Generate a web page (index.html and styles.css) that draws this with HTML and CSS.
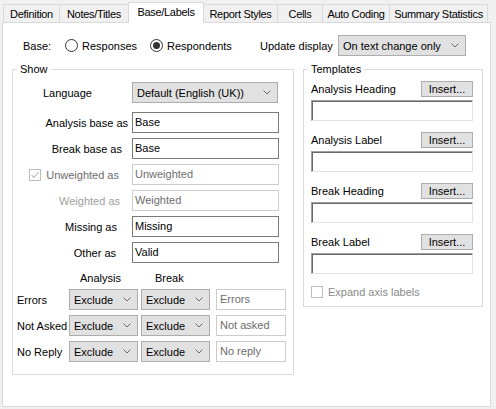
FILE: index.html
```html
<!DOCTYPE html>
<html>
<head>
<meta charset="utf-8">
<link rel="stylesheet" href="styles.css">
</head>
<body>
<div class="tabs">
  <div class="tab t-def">Definition</div>
  <div class="tab t-notes">Notes/Titles</div>
  <div class="tab tab-active t-base">Base/Labels</div>
  <div class="tab t-report">Report Styles</div>
  <div class="tab t-cells">Cells</div>
  <div class="tab t-auto">Auto Coding</div>
  <div class="tab t-sum">Summary Statistics</div>
</div>
<div class="panel">
  <div class="base-row">
    <span class="base-label">Base:</span>
    <span class="radio-opt opt1"><span class="radio"></span>Responses</span>
    <span class="radio-opt opt2"><span class="radio radio-on"></span>Respondents</span>
    <span class="upd-label">Update display</span>
    <div class="select sel-update"><span>On text change only</span><svg class="chev" width="8" height="5" viewBox="0 0 8 5"><polyline points="0.5,0.5 4,4 7.5,0.5" fill="none" stroke="#6a6a6a" stroke-width="1"/></svg></div>
  </div>
  <div class="columns">
    <fieldset class="group show">
      <legend>Show</legend>
      <div class="row lang-row">
        <span class="lang-label">Language</span>
        <div class="select sel-lang"><span>Default (English (UK))</span><svg class="chev" width="8" height="5" viewBox="0 0 8 5"><polyline points="0.5,0.5 4,4 7.5,0.5" fill="none" stroke="#6a6a6a" stroke-width="1"/></svg></div>
      </div>
      <div class="row"><span class="flabel">Analysis base as</span><div class="tbox">Base</div></div>
      <div class="row"><span class="flabel fl-break">Break base as</span><div class="tbox">Base</div></div>
      <div class="row"><span class="flabel fl-unw"><span class="check"><svg width="12" height="12" viewBox="0 0 12 12"><polyline points="2.5,6 5,8.5 9.5,3" fill="none" stroke="#b9b9b9" stroke-width="1.1"/></svg></span>Unweighted as</span><div class="tbox tbox-dis">Unweighted</div></div>
      <div class="row"><span class="flabel fl-w">Weighted as</span><div class="tbox tbox-dis">Weighted</div></div>
      <div class="row"><span class="flabel fl-miss">Missing as</span><div class="tbox">Missing</div></div>
      <div class="row"><span class="flabel fl-other">Other as</span><div class="tbox">Valid</div></div>
      <div class="grid-head"><span class="gh-a">Analysis</span><span class="gh-b">Break</span></div>
      <div class="grow">
        <span class="glabel">Errors</span>
        <div class="select sel-ex"><span>Exclude</span><svg class="chev" width="8" height="5" viewBox="0 0 8 5"><polyline points="0.5,0.5 4,4 7.5,0.5" fill="none" stroke="#6a6a6a" stroke-width="1"/></svg></div>
        <div class="select sel-ex sel-ex2"><span>Exclude</span><svg class="chev" width="8" height="5" viewBox="0 0 8 5"><polyline points="0.5,0.5 4,4 7.5,0.5" fill="none" stroke="#6a6a6a" stroke-width="1"/></svg></div>
        <div class="tbox tbox-dis tbox-small">Errors</div>
      </div>
      <div class="grow">
        <span class="glabel">Not Asked</span>
        <div class="select sel-ex"><span>Exclude</span><svg class="chev" width="8" height="5" viewBox="0 0 8 5"><polyline points="0.5,0.5 4,4 7.5,0.5" fill="none" stroke="#6a6a6a" stroke-width="1"/></svg></div>
        <div class="select sel-ex sel-ex2"><span>Exclude</span><svg class="chev" width="8" height="5" viewBox="0 0 8 5"><polyline points="0.5,0.5 4,4 7.5,0.5" fill="none" stroke="#6a6a6a" stroke-width="1"/></svg></div>
        <div class="tbox tbox-dis tbox-small">Not asked</div>
      </div>
      <div class="grow">
        <span class="glabel">No Reply</span>
        <div class="select sel-ex"><span>Exclude</span><svg class="chev" width="8" height="5" viewBox="0 0 8 5"><polyline points="0.5,0.5 4,4 7.5,0.5" fill="none" stroke="#6a6a6a" stroke-width="1"/></svg></div>
        <div class="select sel-ex sel-ex2"><span>Exclude</span><svg class="chev" width="8" height="5" viewBox="0 0 8 5"><polyline points="0.5,0.5 4,4 7.5,0.5" fill="none" stroke="#6a6a6a" stroke-width="1"/></svg></div>
        <div class="tbox tbox-dis tbox-small">No reply</div>
      </div>
    </fieldset>
    <fieldset class="group templates">
      <legend>Templates</legend>
      <div class="tpl">
        <div class="tpl-head"><span>Analysis Heading</span><div class="btn">Insert...</div></div>
        <div class="sunken"></div>
      </div>
      <div class="tpl">
        <div class="tpl-head"><span>Analysis Label</span><div class="btn">Insert...</div></div>
        <div class="sunken"></div>
      </div>
      <div class="tpl">
        <div class="tpl-head"><span>Break Heading</span><div class="btn">Insert...</div></div>
        <div class="sunken"></div>
      </div>
      <div class="tpl">
        <div class="tpl-head"><span>Break Label</span><div class="btn">Insert...</div></div>
        <div class="sunken"></div>
      </div>
      <div class="expand"><span class="check"></span>Expand axis labels</div>
    </fieldset>
  </div>
</div>
</body>
</html>
```
FILE: styles.css
```css
* { box-sizing: border-box; }
html, body { margin: 0; padding: 0; }
body {
  background: #f0f0f0;
  font-family: "Liberation Sans", Arial, sans-serif;
  font-size: 11px;
  color: #000;
  width: 496px;
  height: 409px;
  overflow: hidden;
}
.tabs {
  display: flex;
  align-items: flex-end;
  height: 21px;
  margin: 2px 0 -1px 3px;
  position: relative;
  z-index: 1;
}
.tab {
  height: 18px;
  margin-bottom: 1px;
  border: 1px solid #d9d9d9;
  border-right: none;
  border-bottom: none;
  background: #f0f0f0;
  text-align: center;
  line-height: 18px;
  white-space: nowrap;
  letter-spacing: -0.3px;
}
.tab-active {
  height: 21px;
  margin-bottom: 0;
  background: #fff;
  border-right: 1px solid #d9d9d9;
  line-height: 19px;
}
.t-def { width: 56px; }
.t-notes { width: 69px; }
.t-base { width: 76px; }
.t-report { width: 73px; border-left: none; }
.t-cells { width: 45px; }
.t-auto { width: 67px; }
.t-sum { width: 99px; border-right: 1px solid #d9d9d9; }

.panel {
  margin-left: 2px;
  width: 489px;
  height: 385px;
  border: 1px solid #d9d9d9;
  background: #fff;
  padding: 12px 0 0 9px;
}
.base-row {
  display: flex;
  align-items: center;
  height: 21px;
}
.base-label { width: 53px; padding-left: 11px; }
.radio-opt { display: flex; align-items: center; }
.opt1 { width: 85px; }
.opt2 { width: 110px; }
.radio {
  width: 13px;
  height: 13px;
  border: 1px solid #333;
  border-radius: 50%;
  margin-right: 4px;
  display: flex;
  align-items: center;
  justify-content: center;
  flex: none;
}
.radio-on::after {
  content: "";
  width: 7px;
  height: 7px;
  border-radius: 50%;
  background: #333;
}
.upd-label { width: 78px; }

.select {
  display: flex;
  align-items: center;
  justify-content: space-between;
  height: 21px;
  background: #e1e1e1;
  border: 1px solid #adadad;
  padding: 0 6px 0 4px;
  white-space: nowrap;
}
.chev { flex: none; }
.sel-update { width: 128px; }
.sel-lang { width: 146px; }

.columns {
  display: flex;
  align-items: flex-start;
  margin-top: 7px;
  gap: 9px;
}
.group {
  margin: 0;
  padding: 0;
  min-width: 0;
  border: 1px solid #dcdcdc;
}
.group legend {
  padding: 0 3px;
  margin-left: 4px;
  line-height: 13px;
}
.show { width: 282px; height: 312px; padding-top: 6px; }
.templates { width: 180px; height: 244px; padding: 5px 0 0 7px; }
.templates legend { margin-left: -3px; }

.row {
  display: flex;
  align-items: center;
  height: 21px;
  margin-bottom: 5px;
}
.lang-row { margin-bottom: 9px; }
.lang-label { width: 119px; padding-left: 30px; }
.flabel {
  width: 119px;
  display: flex;
  justify-content: flex-end;
  align-items: center;
  padding-right: 4px;
  white-space: nowrap;
}
.fl-break { padding-right: 10px; }
.fl-unw { padding-right: 13px; color: #6d6d6d; }
.fl-w { padding-right: 12px; color: #a0a0a0; }
.fl-miss { padding-right: 15px; }
.fl-other { padding-right: 16px; }
.check {
  width: 12px;
  height: 12px;
  border: 1px solid #bcbcbc;
  margin-right: 5px;
  display: flex;
  align-items: center;
  justify-content: center;
  flex: none;
}
.check svg { display: block; flex: none; }
.tbox {
  width: 147px;
  height: 21px;
  border: 1px solid #7a7a7a;
  padding-left: 2px;
  line-height: 19px;
  white-space: nowrap;
}
.tbox-dis { border-color: #cccccc; color: #6d6d6d; }
.tbox-small { width: 70px; padding-left: 3px; }

.grid-head {
  display: flex;
  height: 13px;
  line-height: 13px;
  margin-top: 9px;
  margin-bottom: 4px;
  padding-left: 67px;
}
.gh-a { width: 75px; }
.grow {
  display: flex;
  align-items: center;
  height: 21px;
  margin-bottom: 5px;
}
.glabel { width: 56px; padding-left: 4px; white-space: nowrap; }
.sel-ex { width: 69px; }
.sel-ex2 { margin-left: 3px; margin-right: 6px; }

.tpl { width: 162px; margin-bottom: 11px; }
.tpl-head {
  display: flex;
  justify-content: space-between;
  align-items: center;
  height: 16px;
  margin-bottom: 3px;
}
.btn {
  width: 52px;
  height: 16px;
  background: #e1e1e1;
  border: 1px solid #adadad;
  text-align: center;
  line-height: 14px;
}
.sunken {
  height: 21px;
  border-top: 1px solid #a0a0a0;
  border-left: 1px solid #a0a0a0;
  border-right: 1px solid #e3e3e3;
  border-bottom: 1px solid #e3e3e3;
  box-shadow: inset 1px 1px 0 #696969;
  background: #fff;
}
.expand {
  display: flex;
  align-items: center;
  height: 13px;
  color: #8a8a8a;
}
.expand .check { margin-right: 5px; }
```
